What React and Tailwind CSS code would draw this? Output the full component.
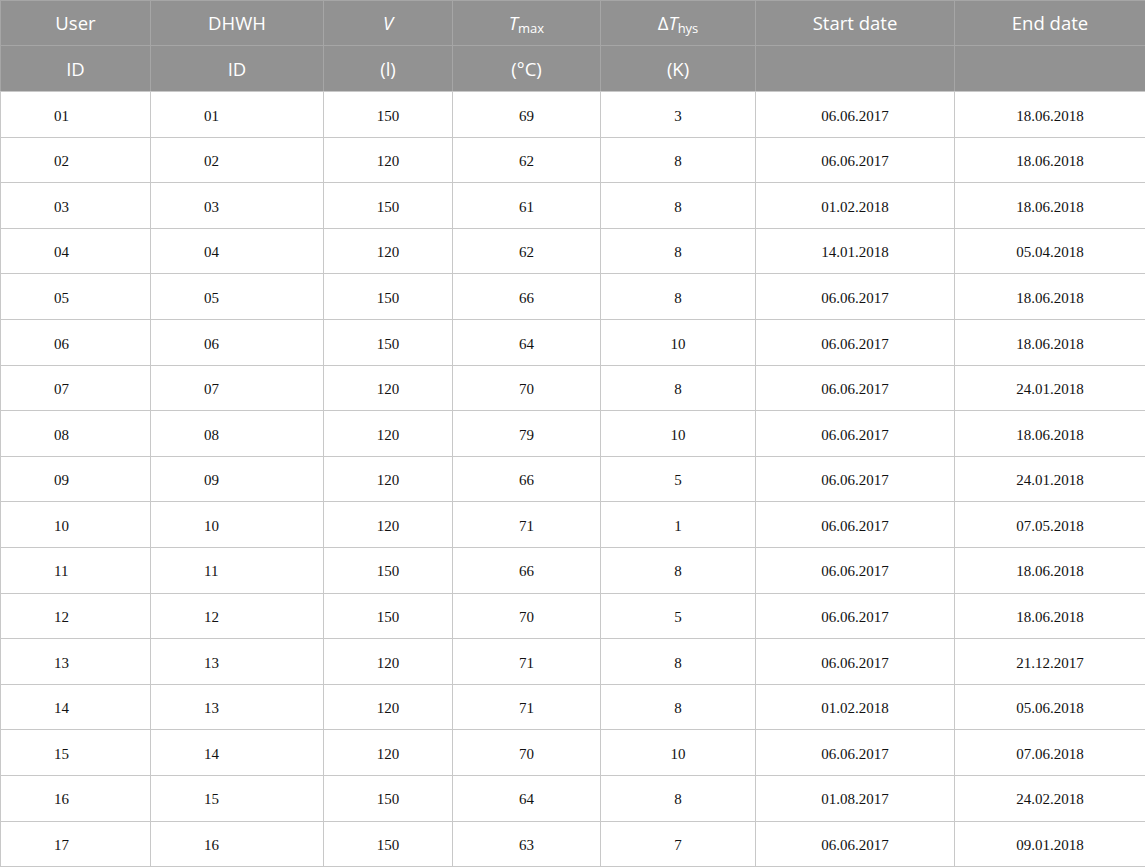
const rows = [
  ["01", "01", "150", "69", "3", "06.06.2017", "18.06.2018"],
  ["02", "02", "120", "62", "8", "06.06.2017", "18.06.2018"],
  ["03", "03", "150", "61", "8", "01.02.2018", "18.06.2018"],
  ["04", "04", "120", "62", "8", "14.01.2018", "05.04.2018"],
  ["05", "05", "150", "66", "8", "06.06.2017", "18.06.2018"],
  ["06", "06", "150", "64", "10", "06.06.2017", "18.06.2018"],
  ["07", "07", "120", "70", "8", "06.06.2017", "24.01.2018"],
  ["08", "08", "120", "79", "10", "06.06.2017", "18.06.2018"],
  ["09", "09", "120", "66", "5", "06.06.2017", "24.01.2018"],
  ["10", "10", "120", "71", "1", "06.06.2017", "07.05.2018"],
  ["11", "11", "150", "66", "8", "06.06.2017", "18.06.2018"],
  ["12", "12", "150", "70", "5", "06.06.2017", "18.06.2018"],
  ["13", "13", "120", "71", "8", "06.06.2017", "21.12.2017"],
  ["14", "13", "120", "71", "8", "01.02.2018", "05.06.2018"],
  ["15", "14", "120", "70", "10", "06.06.2017", "07.06.2018"],
  ["16", "15", "150", "64", "8", "01.08.2017", "24.02.2018"],
  ["17", "16", "150", "63", "7", "06.06.2017", "09.01.2018"],
];

const widths = ["w-[150px]", "w-[173px]", "w-[129px]", "w-[148px]", "w-[155px]", "w-[199px]", "w-[191px]"];

export default function App() {
  return (
    <div className="w-[1145px] bg-white">
      <table className="w-[1145px] table-fixed border-collapse">
        <colgroup>
          {widths.map((w, i) => (
            <col key={i} className={w} />
          ))}
        </colgroup>
        <thead className="bg-[#929292] text-white font-['Open_Sans',sans-serif] text-[18.5px]">
          <tr className="h-[45px]">
            <th className="border border-[#a6a6a6] font-normal">User</th>
            <th className="border border-[#a6a6a6] font-normal">DHWH</th>
            <th className="border border-[#a6a6a6] font-normal italic">V</th>
            <th className="border border-[#a6a6a6] font-normal">
              <span className="italic">T</span>
              <sub className="text-[13px] not-italic">max</sub>
            </th>
            <th className="border border-[#a6a6a6] font-normal">
              Δ<span className="italic">T</span>
              <sub className="text-[13px]">hys</sub>
            </th>
            <th className="border border-[#a6a6a6] font-normal">Start date</th>
            <th className="border border-[#a6a6a6] font-normal">End date</th>
          </tr>
          <tr className="h-[46px]">
            <th className="border border-[#a6a6a6] border-b-[#c8c8c8] font-normal">ID</th>
            <th className="border border-[#a6a6a6] border-b-[#c8c8c8] font-normal">ID</th>
            <th className="border border-[#a6a6a6] border-b-[#c8c8c8] font-normal">(l)</th>
            <th className="border border-[#a6a6a6] border-b-[#c8c8c8] font-normal">(°C)</th>
            <th className="border border-[#a6a6a6] border-b-[#c8c8c8] font-normal">(K)</th>
            <th className="border border-[#a6a6a6] border-b-[#c8c8c8] font-normal"></th>
            <th className="border border-[#a6a6a6] border-b-[#c8c8c8] font-normal"></th>
          </tr>
        </thead>
        <tbody className="font-['Liberation_Serif',serif] text-[15px] text-[#111]">
          {rows.map((r, i) => (
            <tr key={i} className="h-[45.6px]">
              {r.map((c, j) => (
                <td
                  key={j}
                  className={
                    j < 2
                      ? "border border-[#c8c8c8] pl-[53px] pt-[3px] text-left"
                      : "border border-[#c8c8c8] pt-[3px] text-center"
                  }
                >
                  {c}
                </td>
              ))}
            </tr>
          ))}
        </tbody>
      </table>
    </div>
  );
}
